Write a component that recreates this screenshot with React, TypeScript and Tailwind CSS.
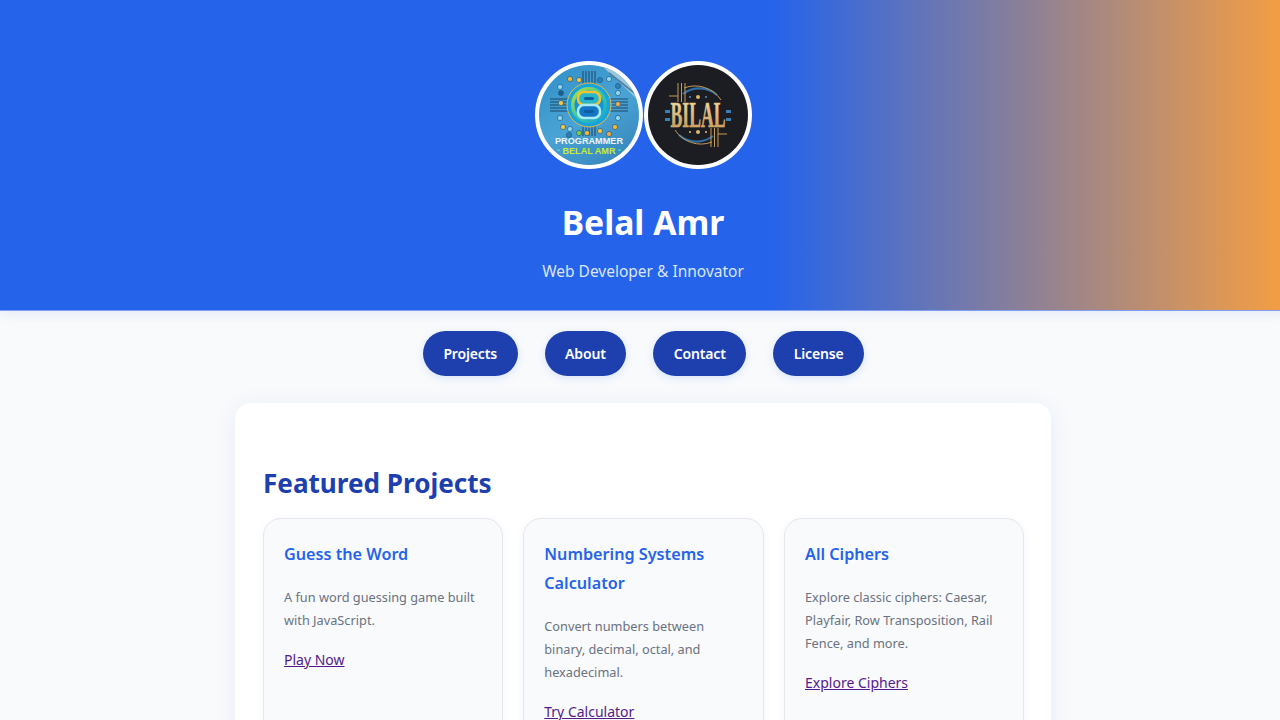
const FONT = "font-['Noto_Sans','Open_Sans',sans-serif]";

const projects = [
  {
    title: "Guess the Word",
    desc: ["A fun word guessing game built", "with JavaScript."],
    link: "Play Now",
  },
  {
    title: "Numbering Systems Calculator",
    desc: ["Convert numbers between", "binary, decimal, octal, and", "hexadecimal."],
    link: "Try Calculator",
  },
  {
    title: "All Ciphers",
    desc: ["Explore classic ciphers: Caesar,", "Playfair, Row Transposition, Rail", "Fence, and more."],
    link: "Explore Ciphers",
  },
];

const navItems = ["Projects", "About", "Contact", "License"];

// node positions around the emblem: x, y, colour
const NODES: [number, number, string][] = [
  [-19, -36, "#f5b82e"], [-10, -35, "#f5c542"], [11, -35, "#2f7fb5"], [20, -36, "#8fd8ee"],
  [-29, -28, "#8fd8ee"], [29, -29, "#2f7fb5"], [-28, -22, "#1f5f8f"], [29, -22, "#8fd8ee"],
  [-28, -12, "#f5c542"], [29, -11, "#f5a742"], [-29, 3, "#8fd8ee"], [29, 3, "#8fd8ee"],
  [-26, 12, "#f5c542"], [26, 12, "#f5b82e"], [-19, 14, "#8fd8ee"], [-10, 18, "#7cd13a"],
  [-20, 20, "#2f7fb5"], [11, 16, "#f5c542"], [20, 19, "#f5a742"], [-2, 18, "#f5b82e"],
];

const TRACE_OFFSETS = [-6, -3, 0, 3, 6];

function ProgrammerLogo() {
  return (
    <svg viewBox="-50 -50 100 100" className="block w-full h-full">
      <defs>
        <linearGradient id="progBg" x1="0" y1="0" x2="0.6" y2="1">
          <stop offset="0" stop-color="#2f8fc8" />
          <stop offset="0.6" stop-color="#4aa3d4" />
          <stop offset="1" stop-color="#3a8cc0" />
        </linearGradient>
        <linearGradient id="ringGreen" x1="0" y1="0" x2="1" y2="1">
          <stop offset="0" stop-color="#c8e02e" />
          <stop offset="0.5" stop-color="#3cc9a0" />
          <stop offset="1" stop-color="#12a0dc" />
        </linearGradient>
      </defs>
      <rect x="-50" y="-50" width="100" height="100" fill="url(#progBg)" />
      <path d="M12 -50 L50 -50 L50 -14 Z" fill="#9cc6de" />
      <path d="M20 -42 L48 -20 M28 -46 L50 -28" stroke="#4d7fa3" strokeWidth="1.6" />
      {/* circuit traces */}
      {TRACE_OFFSETS.map((o) => (
        <g key={o} stroke="#173f5e" strokeWidth="0.9" fill="none">
          <line x1={o} y1="-44" x2={o} y2="-30" />
          <line x1={o} y1="10" x2={o} y2="21" />
          <line x1="-39" y1={o - 10} x2="-20" y2={o - 10} />
          <line x1="20" y1={o - 10} x2="39" y2={o - 10} />
        </g>
      ))}
      {NODES.map(([x, y, c], i) => (
        <circle key={i} cx={x} cy={y} r="2.6" fill={c} stroke="#1c5f8c" strokeWidth="0.7" />
      ))}
      {/* emblem */}
      <circle cx="0" cy="-10" r="22" fill="#17a4dc" stroke="#eab93f" strokeWidth="1" />
      <circle cx="0" cy="-10" r="18" fill="url(#ringGreen)" />
      <circle cx="0" cy="-10" r="14.5" fill="#1892d6" />
      <rect x="-11" y="-23" width="22" height="13" rx="6" fill="#28b7c9" stroke="#f2c230" strokeWidth="2.6" />
      <rect x="-11" y="-10" width="22" height="13" rx="6" fill="#1476c4" stroke="#a9ecf5" strokeWidth="2.6" />
      <rect x="-5" y="-18" width="10" height="3" rx="1.5" fill="#0f5f9e" />
      <rect x="-5" y="-5" width="10" height="3" rx="1.5" fill="#0f5f9e" />
      <text x="0" y="28.5" textAnchor="middle" fontFamily="Liberation Sans, sans-serif" fontWeight="700" fontSize="9.4" fill="#eef6fa" textLength="68" lengthAdjust="spacingAndGlyphs">
        PROGRAMMER
      </text>
      <rect x="-32" y="34.5" width="3" height="1.2" fill="#4fe0d0" />
      <rect x="29" y="34.5" width="3" height="1.2" fill="#4fe0d0" />
      <text x="0" y="38.5" textAnchor="middle" fontFamily="Liberation Sans, sans-serif" fontWeight="700" fontSize="9.4" fill="#c7ef2e" textLength="53" lengthAdjust="spacingAndGlyphs">
        BELAL AMR
      </text>
    </svg>
  );
}

function BilalLogo() {
  return (
    <svg viewBox="-50 -50 100 100" className="block w-full h-full">
      <defs>
        <linearGradient id="gold" x1="0" y1="0" x2="0" y2="1">
          <stop offset="0" stop-color="#f6e6b8" />
          <stop offset="1" stop-color="#c08c45" />
        </linearGradient>
      </defs>
      <rect x="-50" y="-50" width="100" height="100" fill="#1b1d22" />
      <path d="M-15 -21 A27 27 0 0 1 19 -20" fill="none" stroke="#2f6fa5" strokeWidth="2.2" />
      <path d="M-14 -27 A31 31 0 0 1 23 -15" fill="none" stroke="#c79a55" strokeWidth="1" />
      <path d="M-19 20 A27 27 0 0 0 15 21" fill="none" stroke="#2f6fa5" strokeWidth="2.2" />
      <path d="M14 27 A31 31 0 0 1 -23 15" fill="none" stroke="#c79a55" strokeWidth="1" />
      <path d="M-20 -32 V-13 M-16.5 -32 V-13 M-13 -32 V-13 M-29 -19 H-20" stroke="#c79a55" strokeWidth="1" fill="none" />
      <path d="M20 32 V13 M16.5 32 V13 M13 32 V13 M29 19 H20" stroke="#c79a55" strokeWidth="1" fill="none" />
      <circle cx="0" cy="-18" r="2" fill="#e0b66c" />
      <circle cx="-8" cy="-18" r="1.1" fill="#4c8fc4" />
      <circle cx="8" cy="-18" r="1.1" fill="#4c8fc4" />
      <circle cx="0" cy="17" r="2" fill="#e0b66c" />
      <circle cx="-8" cy="17" r="1.1" fill="#e0b66c" />
      <circle cx="8" cy="17" r="1.1" fill="#e0b66c" />
      <rect x="-33" y="-5" width="5" height="3" fill="#3a7fb5" />
      <rect x="-33" y="3" width="5" height="3" fill="#3a7fb5" />
      <rect x="28" y="-5" width="5" height="3" fill="#3a7fb5" />
      <rect x="28" y="3" width="5" height="3" fill="#3a7fb5" />
      <rect x="-28" y="-11" width="56" height="24" fill="#1b1d22" />
      <g transform="translate(0 12) scale(0.88 1.75)">
        <text x="0" y="0" textAnchor="middle" fontFamily="Liberation Serif, serif" fontWeight="700" fontSize="20" fill="url(#gold)" stroke="#e3bd7c" strokeWidth="0.3">
          BILAL
        </text>
      </g>
    </svg>
  );
}

function Avatar({ children }: { children: React.ReactNode }) {
  return (
    <div className="w-[108px] h-[108px] rounded-full border-4 border-white overflow-hidden bg-white">
      {children}
    </div>
  );
}

function ProjectCard({ title, desc, link }: { title: string; desc: string[]; link: string }) {
  return (
    <div className="min-h-[240px] bg-[#f8fafc] border border-[#e5e7eb] rounded-[18px] shadow-[0_2px_8px_rgba(37,99,235,0.06)] px-5 pt-[21px] pb-6">
      <h3 className="text-[#2563eb] text-[16.2px] font-semibold leading-[29px] mb-[17px]">{title}</h3>
      <p className="text-[#6b7280] text-[12.75px] leading-[23px] mb-[16px]">
        {desc.map((line) => (
          <span key={line} className="block whitespace-nowrap">
            {line}
          </span>
        ))}
      </p>
      <a href="#" className="text-[#551a8b] text-[14px] leading-[24px] underline block">
        {link}
      </a>
    </div>
  );
}

export default function App() {
  return (
    <div className={`${FONT} h-[720px] w-[1280px] overflow-hidden bg-[#f8fafc]`}>
      <div className="w-[1286px]">
        {/* HEADER */}
        <header className="h-[311px] bg-[linear-gradient(90deg,#2563eb_60%,#f59e42_100%)] border-b border-[#7f9ff0] flex flex-col items-center pt-[61px] text-white shadow-[0_2px_12px_rgba(30,64,175,0.1)]">
          <div className="flex gap-px">
            <Avatar>
              <ProgrammerLogo />
            </Avatar>
            <Avatar>
              <BilalLogo />
            </Avatar>
          </div>
          <h1 className="text-[33.7px] font-bold leading-[46px] mt-[30px]">Belal Amr</h1>
          <p className="text-[15.5px] leading-[24px] mt-[14px] text-[#dbe6fd]">Web Developer &amp; Innovator</p>
        </header>

        {/* NAV */}
        <nav className="flex justify-center gap-[27px] mt-5 pl-px">
          {navItems.map((item) => (
            <a
              key={item}
              href="#"
              className="h-[45px] px-[20.5px] flex items-center rounded-full bg-[#1e40af] text-white text-[14px] tracking-[-0.15px] font-semibold shadow-[0_2px_8px_rgba(37,99,235,0.15)]"
            >
              {item}
            </a>
          ))}
        </nav>

        {/* MAIN */}
        <main className="w-[816px] mx-auto mt-[27px] bg-white rounded-[16px] shadow-[0_4px_24px_rgba(30,64,175,0.08)] pl-7 pr-[27px] pt-[60px] pb-10">
          <h2 className="text-[#1e40af] text-[26.1px] font-bold leading-[40px] mb-[15px]">Featured Projects</h2>
          <div className="grid grid-cols-[240px_240.5px_240px] gap-x-[20.25px]">
            {projects.map((p) => (
              <ProjectCard key={p.title} {...p} />
            ))}
          </div>
        </main>
      </div>
    </div>
  );
}
